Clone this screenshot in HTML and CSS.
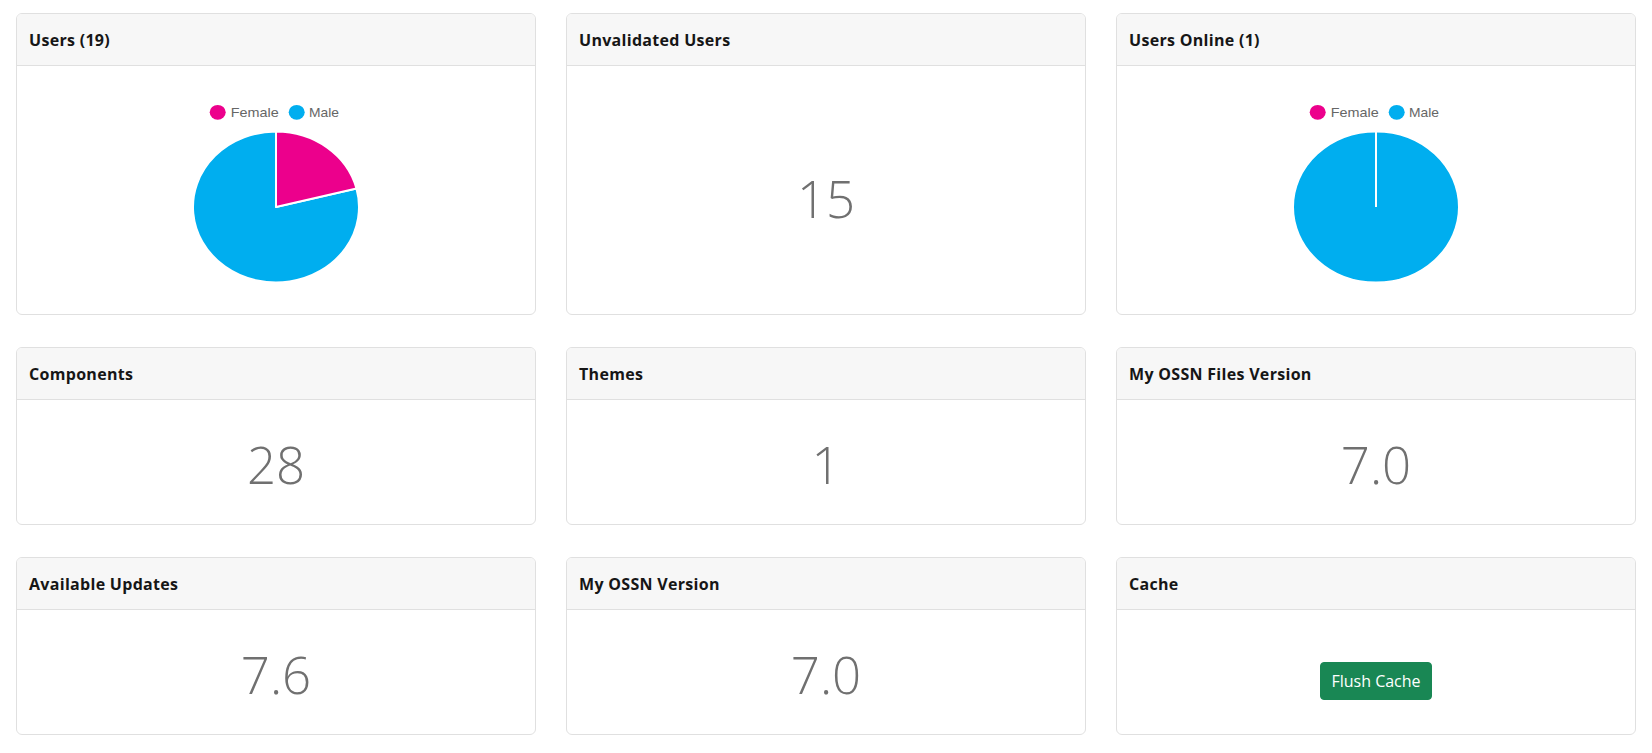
FILE: index.html
```html
<!DOCTYPE html>
<html lang="en">
<head>
<meta charset="utf-8">
<title>Dashboard</title>
<link rel="stylesheet" href="styles.css">
</head>
<body>
<div class="grid">
  <div class="card card-tall">
    <div class="card-header">Users (19)</div>
    <div class="card-body chart-body">
      <svg class="pie" width="220" height="230" viewBox="0 0 220 230">
        <ellipse cx="51.7" cy="46.3" rx="8" ry="7.4" fill="#ec008c"/>
        <text x="64.7" y="50.8" textLength="48" lengthAdjust="spacingAndGlyphs" class="legend">Female</text>
        <ellipse cx="130.7" cy="46.3" rx="8" ry="7.4" fill="#00aeef"/>
        <text x="143" y="50.8" textLength="30" lengthAdjust="spacingAndGlyphs" class="legend">Male</text>
        <path d="M110,141 L190.46,122.46 A83,75.5 0 1 1 110,65.5 Z" fill="#00aeef" stroke="#fff" stroke-width="2" stroke-linejoin="round"/>
        <path d="M110,141 L110,65.5 A83,75.5 0 0 1 190.46,122.46 Z" fill="#ec008c" stroke="#fff" stroke-width="2" stroke-linejoin="round"/>
      </svg>
    </div>
  </div>
  <div class="card card-tall">
    <div class="card-header">Unvalidated Users</div>
    <div class="card-body num-body num-tall"><span class="num">15</span></div>
  </div>
  <div class="card card-tall">
    <div class="card-header">Users Online (1)</div>
    <div class="card-body chart-body">
      <svg class="pie" width="220" height="230" viewBox="0 0 220 230">
        <ellipse cx="51.7" cy="46.3" rx="8" ry="7.4" fill="#ec008c"/>
        <text x="64.7" y="50.8" textLength="48" lengthAdjust="spacingAndGlyphs" class="legend">Female</text>
        <ellipse cx="130.7" cy="46.3" rx="8" ry="7.4" fill="#00aeef"/>
        <text x="143" y="50.8" textLength="30" lengthAdjust="spacingAndGlyphs" class="legend">Male</text>
        <ellipse cx="110" cy="141" rx="83" ry="75.5" fill="#00aeef" stroke="#fff" stroke-width="2"/>
        <line x1="110" y1="141" x2="110" y2="65" stroke="#fff" stroke-width="2"/>
      </svg>
    </div>
  </div>

  <div class="card">
    <div class="card-header">Components</div>
    <div class="card-body num-body"><span class="num">28</span></div>
  </div>
  <div class="card">
    <div class="card-header">Themes</div>
    <div class="card-body num-body"><span class="num">1</span></div>
  </div>
  <div class="card">
    <div class="card-header">My OSSN Files Version</div>
    <div class="card-body num-body"><span class="num">7.0</span></div>
  </div>

  <div class="card">
    <div class="card-header">Available Updates</div>
    <div class="card-body num-body"><span class="num">7.6</span></div>
  </div>
  <div class="card">
    <div class="card-header">My OSSN Version</div>
    <div class="card-body num-body"><span class="num">7.0</span></div>
  </div>
  <div class="card">
    <div class="card-header">Cache</div>
    <div class="card-body btn-body"><button class="btn-success" type="button">Flush Cache</button></div>
  </div>
</div>
</body>
</html>
```
FILE: styles.css
```css
* { box-sizing: border-box; }

html, body { overflow: hidden; }

body {
  margin: 13px 16px 0 16px;
  background: #fff;
  font-family: "Open Sans", "Noto Sans", "Liberation Sans", sans-serif;
  color: #212529;
}

.grid {
  display: grid;
  grid-template-columns: repeat(3, 1fr);
  grid-template-rows: 302px 178px 178px;
  column-gap: 30px;
  row-gap: 32px;
}

.card {
  display: flex;
  flex-direction: column;
  min-width: 0;
  border: 1px solid #e0e0e0;
  border-radius: 6px;
  background: #fff;
  overflow: hidden;
}

.card-header {
  height: 52px;
  padding: 0 12px;
  display: flex;
  align-items: center;
  background: #f7f7f7;
  border-bottom: 1px solid #e0e0e0;
  font-size: 16px;
  font-weight: 700;
  letter-spacing: 0.3px;
  color: #161616;
}

.card-body {
  flex: 1;
  display: flex;
  justify-content: center;
}

.chart-body {
  align-items: flex-start;
}

.pie { display: block; }

.legend {
  font-family: "Liberation Sans", Arial, sans-serif;
  font-size: 13px;
  fill: #666;
}

.num-body {
  align-items: center;
  padding-top: 6px;
}

.num-tall {
  padding-top: 18px;
}

.num {
  font-size: 51px;
  font-weight: 300;
  line-height: 1.2;
  color: #707070;
}

.btn-body {
  align-items: center;
  padding-top: 17px;
}

.btn-success {
  font-family: "Open Sans", "Noto Sans", sans-serif;
  font-size: 16px;
  line-height: 24px;
  padding: 6px 10px;
  color: #fff;
  background: #198754;
  border: 1px solid #198754;
  border-radius: 4px;
}
```
